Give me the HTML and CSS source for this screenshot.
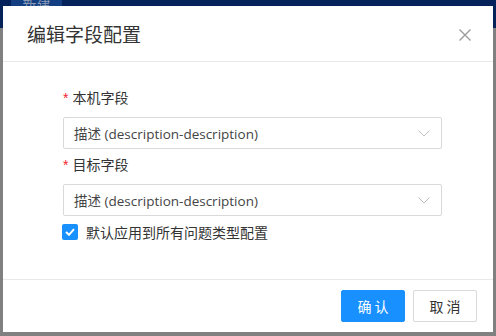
FILE: index.html
```html
<!DOCTYPE html>
<html>
<head>
  <title>编辑字段配置</title>
  <link rel="stylesheet" href="styles.css">
</head>
<body>
  <div class="topbar">
    <div class="tab">新建</div>
  </div>

  <div class="modal">
    <div class="modal-header">
      <h2 class="modal-title">编辑字段配置</h2>
      <span class="modal-close">
        <svg width="12" height="12" viewBox="0 0 12 12">
          <path d="M0.5 0.5 L11.5 11.5 M11.5 0.5 L0.5 11.5" stroke="#9a9a9a" stroke-width="1.4" fill="none"/>
        </svg>
      </span>
    </div>

    <div class="modal-body">
      <div class="form-item">
        <label class="form-label"><span class="required">*</span>本机字段</label>
        <div class="select">
          <span class="select-value">描述 (description-description)</span>
          <svg class="select-arrow" width="12" height="7" viewBox="0 0 12 7">
            <path d="M0.5 0.5 L6 6 L11.5 0.5" stroke="#bfbfbf" stroke-width="1" fill="none"/>
          </svg>
        </div>
      </div>

      <div class="form-item">
        <label class="form-label"><span class="required">*</span>目标字段</label>
        <div class="select">
          <span class="select-value">描述 (description-description)</span>
          <svg class="select-arrow" width="12" height="7" viewBox="0 0 12 7">
            <path d="M0.5 0.5 L6 6 L11.5 0.5" stroke="#bfbfbf" stroke-width="1" fill="none"/>
          </svg>
        </div>
      </div>

      <div class="checkbox-row">
        <span class="checkbox">
          <svg width="10" height="8" viewBox="0 0 10 8">
            <path d="M1 4 L4 6.8 L9 1.2" stroke="#fff" stroke-width="2" fill="none"/>
          </svg>
        </span>
        <span class="checkbox-label">默认应用到所有问题类型配置</span>
      </div>
    </div>

    <div class="modal-footer">
      <button class="btn btn-primary">确 认</button>
      <button class="btn">取 消</button>
    </div>
  </div>
</body>
</html>
```

FILE: styles.css
```css
body {
  margin: 0;
  width: 496px;
  height: 336px;
  overflow: hidden;
  font-family: "Open Sans", "Noto Sans CJK SC", sans-serif;
  background: #808080;
  color: #333;
}

.topbar {
  height: 28px;
  background: #05235a;
  padding-left: 11px;
}

.tab {
  width: 51px;
  height: 28px;
  background: #133f82;
  color: #8c9bb5;
  font-family: "Noto Sans CJK SC", sans-serif;
  font-size: 14px;
  text-align: center;
  line-height: 8px;
}

.modal {
  position: absolute;
  left: 3px;
  top: 6px;
  width: 490px;
  height: 326px;
  background: #fff;
  display: flex;
  flex-direction: column;
}

.modal-header {
  height: 56px;
  display: flex;
  align-items: center;
  justify-content: space-between;
  padding: 0 22px 0 24px;
  border-bottom: 1px solid #e8e8e8;
  box-sizing: border-box;
}

.modal-title {
  margin: 0;
  font-family: "Noto Sans CJK SC", sans-serif;
  font-size: 19px;
  font-weight: 400;
  color: #333;
  line-height: 24px;
}

.modal-close {
  display: flex;
  margin-top: 2px;
}

.modal-body {
  flex: 1;
  padding: 24px 51px 0 60px;
}

.form-item {
  margin-bottom: 4px;
}

.form-label {
  display: block;
  font-family: "Noto Sans CJK SC", sans-serif;
  font-size: 14px;
  line-height: 22px;
  color: #333;
  margin-bottom: 8px;
}

.required {
  color: #f5222d;
  margin-right: 4px;
  font-family: "Liberation Sans", sans-serif;
}

.select {
  height: 32px;
  border: 1px solid #d9d9d9;
  border-radius: 2px;
  box-sizing: border-box;
  display: flex;
  align-items: center;
  justify-content: space-between;
  padding: 0 11px 0 10px;
}

.select-value {
  font-size: 13.5px;
  color: #444;
}

.checkbox-row {
  display: flex;
  align-items: center;
  margin-top: 5px;
  margin-left: -1px;
}

.checkbox {
  width: 16px;
  height: 16px;
  background: #1890ff;
  border-radius: 2px;
  display: flex;
  align-items: center;
  justify-content: center;
  margin-right: 8px;
}

.checkbox-label {
  font-family: "Noto Sans CJK SC", sans-serif;
  font-size: 14px;
  line-height: 22px;
  color: #333;
}

.modal-footer {
  height: 53px;
  border-top: 1px solid #e8e8e8;
  box-sizing: border-box;
  display: flex;
  align-items: center;
  justify-content: flex-end;
  gap: 8px;
  padding: 0 16px;
}

.btn {
  width: 64px;
  height: 32px;
  border: 1px solid #d9d9d9;
  border-radius: 2px;
  background: #fff;
  color: #333;
  font-family: "Noto Sans CJK SC", sans-serif;
  font-size: 14px;
  padding: 0;
}

.btn-primary {
  background: #1890ff;
  border-color: #1890ff;
  color: #fff;
}
```
